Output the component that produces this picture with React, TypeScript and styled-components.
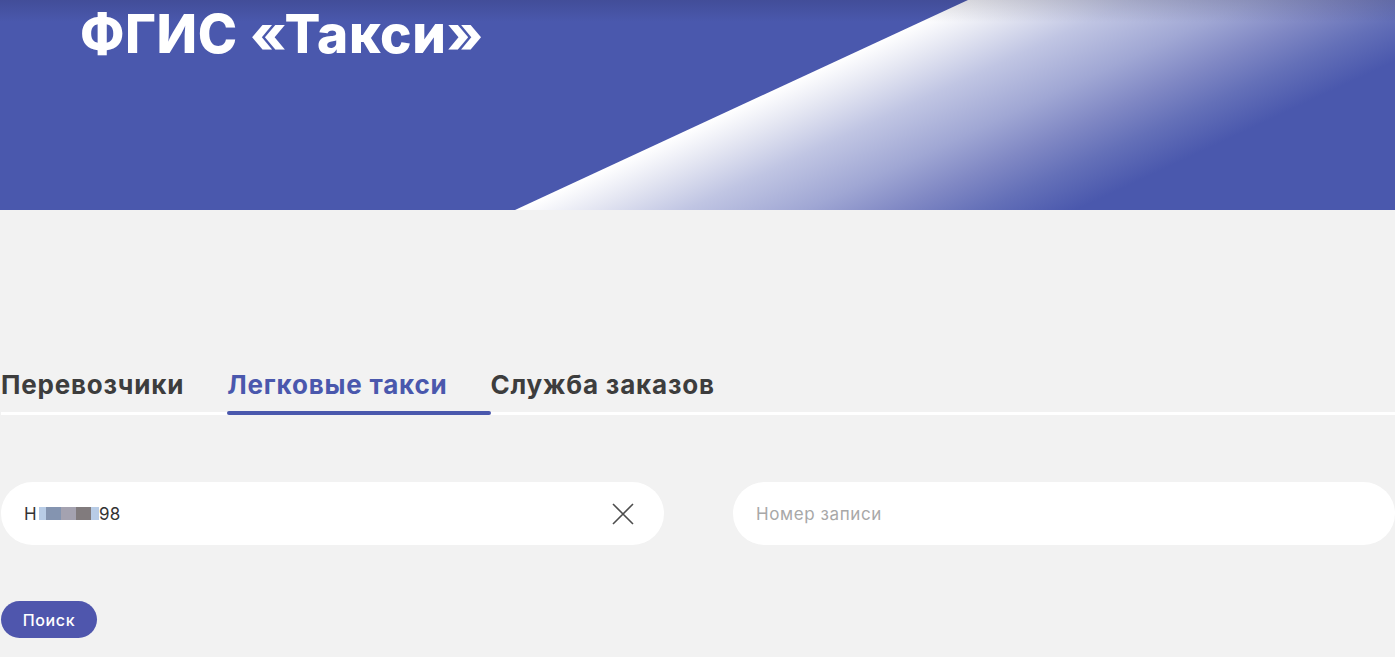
import styled, { createGlobalStyle } from "styled-components";

const GlobalStyle = createGlobalStyle`
  html, body {
    margin: 0;
    padding: 0;
    background: #f2f2f2;
    font-family: Inter, "Noto Sans", "Liberation Sans", sans-serif;
    overflow: hidden;
  }
  * {
    box-sizing: border-box;
  }
`;

const tabs = ["Перевозчики", "Легковые такси", "Служба заказов"];

// pixelated part of the masked number
const maskCells = [
  { color: "#b8cce6", width: 7 },
  { color: "#8494b0", width: 15 },
  { color: "#a4a2b0", width: 15 },
  { color: "#817b7d", width: 15 },
  { color: "#b8cce6", width: 8 },
];

const App = () => {
  return (
    <Page>
      <GlobalStyle />
      <Header>
        <Title>ФГИС «Такси»</Title>
      </Header>
      <Content>
        <TabBar>
          {tabs.map((t, i) => (
            <Tab key={t} active={i === 1}>
              {t}
            </Tab>
          ))}
        </TabBar>
        <Fields>
          <Field>
            <Value>
              Н
              <Masked>
                {maskCells.map((c, i) => (
                  <i key={i} style={{ background: c.color, width: c.width }} />
                ))}
              </Masked>
              98
            </Value>
            <ClearButton aria-label="Очистить">
              <svg width="22" height="22" viewBox="0 0 22 22">
                <path d="M1 1 L21 21 M21 1 L1 21" stroke="#4d4d4d" strokeWidth="1.6" fill="none" />
              </svg>
            </ClearButton>
          </Field>
          <Field>
            <Placeholder>Номер записи</Placeholder>
          </Field>
        </Fields>
        <SearchButton>Поиск</SearchButton>
      </Content>
    </Page>
  );
};

export default App;

const Page = styled.div`
  width: 1395px;
  min-height: 657px;
`;

const Header = styled.header`
  position: relative;
  height: 210px;
  background: #4a58ad;
  padding: 6px 0 0 80px;
  overflow: hidden;

  &::before {
    content: "";
    position: absolute;
    inset: 0;
    clip-path: polygon(515px 210px, 968px 0, 100% 0, 100% 100%);
    background: linear-gradient(
      155deg,
      #ffffff 409px,
      #e4e6f2 440px,
      #c0c5e3 480px,
      #a0a7d4 530px,
      #8088c4 570px,
      #6470b8 605px,
      #4a58ad 645px
    );
  }

  &::after {
    content: "";
    position: absolute;
    inset: 0;
    background: linear-gradient(
      to bottom,
      rgba(30, 30, 60, 0.18),
      rgba(30, 30, 60, 0) 22px
    );
    pointer-events: none;
  }
`;

const Title = styled.h1`
  position: relative;
  z-index: 1;
  margin: 0;
  font-size: 53px;
  line-height: 56px;
  font-weight: 800;
  color: #ffffff;
  letter-spacing: 0.6px;
`;

const Content = styled.main`
  padding: 160px 0 0 1px;
`;

const TabBar = styled.nav`
  display: flex;
  border-bottom: 3px solid #ffffff;
`;

const Tab = styled.div<{ active?: boolean }>`
  position: relative;
  padding: 0 43px 12px 0;
  font-size: 26px;
  line-height: 30px;
  font-weight: 700;
  letter-spacing: 0.8px;
  color: ${(p) => (p.active ? "#4a58ad" : "#3d3d3d")};
  cursor: pointer;

  &::after {
    content: "";
    display: ${(p) => (p.active ? "block" : "none")};
    position: absolute;
    left: 0;
    right: 0;
    bottom: -3px;
    height: 4px;
    border-radius: 2px;
    background: #4a58ad;
  }
`;

const Fields = styled.div`
  display: grid;
  grid-template-columns: 663px 662px;
  gap: 69px;
  margin-top: 67px;
`;

const Field = styled.div`
  display: flex;
  align-items: center;
  justify-content: space-between;
  height: 63px;
  padding: 0 30px 0 23px;
  background: #ffffff;
  border-radius: 32px;
`;

const Value = styled.span`
  display: flex;
  align-items: center;
  font-size: 17px;
  letter-spacing: 0.3px;
  color: #333333;
`;

const Masked = styled.span`
  display: inline-flex;
  height: 13px;
  margin: 0 0 0 2px;

  i {
    display: block;
    height: 100%;
  }
`;

const Placeholder = styled.span`
  font-size: 17px;
  letter-spacing: 0.6px;
  color: #a8a8a8;
`;

const ClearButton = styled.button`
  display: flex;
  padding: 0;
  border: 0;
  background: none;
  cursor: pointer;
`;

const SearchButton = styled.button`
  display: block;
  margin-top: 56px;
  width: 96px;
  height: 37px;
  border: 0;
  border-radius: 19px;
  background: #4f56ad;
  color: #ffffff;
  font-family: inherit;
  font-size: 16px;
  font-weight: 500;
  letter-spacing: 0.6px;
  cursor: pointer;
`;
